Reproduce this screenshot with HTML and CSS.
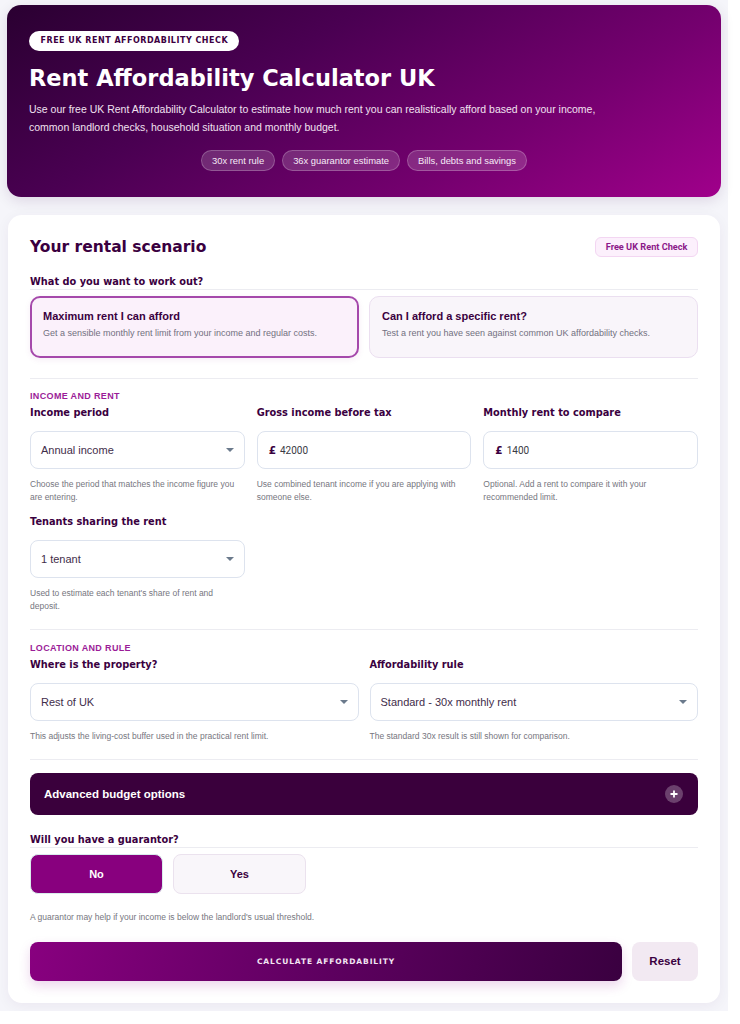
FILE: index.html
```html
<!DOCTYPE html>
<html lang="en">
<head>
<meta charset="utf-8">
<title>Rent Affordability Calculator UK</title>
<link rel="stylesheet" href="styles.css">
</head>
<body>
<div class="page">
  <header class="hero">
    <div class="pill-row"><span class="pill">Free UK Rent Affordability Check</span></div>
    <h1>Rent Affordability Calculator UK</h1>
    <p>Use our free UK Rent Affordability Calculator to estimate how much rent you can realistically afford based on your income, common landlord checks, household situation and monthly budget.</p>
    <div class="chips">
      <span class="chip">30x rent rule</span>
      <span class="chip">36x guarantor estimate</span>
      <span class="chip">Bills, debts and savings</span>
    </div>
  </header>

  <main class="card">
    <div class="card-head">
      <h2>Your rental scenario</h2>
      <span class="badge">Free UK Rent Check</span>
    </div>

    <div class="q-label">What do you want to work out?</div>
    <div class="options">
      <div class="option active">
        <div class="opt-title">Maximum rent I can afford</div>
        <div class="opt-desc">Get a sensible monthly rent limit from your income and regular costs.</div>
      </div>
      <div class="option">
        <div class="opt-title">Can I afford a specific rent?</div>
        <div class="opt-desc">Test a rent you have seen against common UK affordability checks.</div>
      </div>
    </div>

    <section class="section s-income">
      <div class="section-title">Income and rent</div>
      <div class="grid3">
        <div class="field">
          <div class="label">Income period</div>
          <div class="control select"><span class="val">Annual income</span><svg class="arrow" width="8" height="4" viewBox="0 0 8 4"><path d="M0 0H8L4 4Z" fill="#6b7a8c"/></svg></div>
          <div class="help">Choose the period that matches the income figure you are entering.</div>
        </div>
        <div class="field">
          <div class="label">Gross income before tax</div>
          <div class="control"><span class="pound">£</span><span class="num">42000</span></div>
          <div class="help">Use combined tenant income if you are applying with someone else.</div>
        </div>
        <div class="field">
          <div class="label">Monthly rent to compare</div>
          <div class="control"><span class="pound">£</span><span class="num">1400</span></div>
          <div class="help">Optional. Add a rent to compare it with your recommended limit.</div>
        </div>
        <div class="field">
          <div class="label">Tenants sharing the rent</div>
          <div class="control select"><span class="val">1 tenant</span><svg class="arrow" width="8" height="4" viewBox="0 0 8 4"><path d="M0 0H8L4 4Z" fill="#6b7a8c"/></svg></div>
          <div class="help">Used to estimate each tenant's share of rent and deposit.</div>
        </div>
      </div>
    </section>

    <section class="section s-location">
      <div class="section-title">Location and rule</div>
      <div class="grid2">
        <div class="field">
          <div class="label">Where is the property?</div>
          <div class="control select"><span class="val">Rest of UK</span><svg class="arrow" width="8" height="4" viewBox="0 0 8 4"><path d="M0 0H8L4 4Z" fill="#6b7a8c"/></svg></div>
          <div class="help">This adjusts the living-cost buffer used in the practical rent limit.</div>
        </div>
        <div class="field">
          <div class="label">Affordability rule</div>
          <div class="control select"><span class="val">Standard - 30x monthly rent</span><svg class="arrow" width="8" height="4" viewBox="0 0 8 4"><path d="M0 0H8L4 4Z" fill="#6b7a8c"/></svg></div>
          <div class="help">The standard 30x result is still shown for comparison.</div>
        </div>
      </div>
    </section>

    <section class="section s-adv">
      <div class="accordion">
        <span>Advanced budget options</span>
        <span class="plus"><svg width="8" height="8" viewBox="0 0 8 8"><path d="M4 0.5V7.5M0.5 4H7.5" stroke="#fff" stroke-width="1.8"/></svg></span>
      </div>
    </section>

    <div class="q-label q-guar">Will you have a guarantor?</div>
    <div class="toggle">
      <button class="tbtn on">No</button>
      <button class="tbtn">Yes</button>
    </div>
    <div class="help help-guar">A guarantor may help if your income is below the landlord's usual threshold.</div>

    <div class="actions">
      <button class="calc">Calculate affordability</button>
      <button class="reset">Reset</button>
    </div>
  </main>
</div>
</body>
</html>
```

FILE: styles.css
```css
html { background: #ffffff; }
body {
  margin: 0;
  font-family: "Liberation Sans", Arial, sans-serif;
  color: #3b0042;
}
.page {
  width: 728px;
  box-sizing: border-box;
  background: #f5f5fa;
  padding: 5px 7px 8px 7px;
}

/* HERO */
.hero {
  border-radius: 14px;
  background: linear-gradient(150deg, #2a0031 0%, #4a0052 35%, #75006f 70%, #a0008b 100%);
  padding: 26px 22px 26px;
  color: #fff;
  box-shadow: 0 4px 14px rgba(60, 0, 70, 0.12);
}
.pill-row {
  display: flex;
  height: 20px;
}
.pill {
  display: block;
  background: #fff;
  color: #3d0042;
  font-family: "DejaVu Sans", sans-serif;
  font-weight: 700;
  font-size: 8px;
  letter-spacing: 0.5px;
  text-transform: uppercase;
  line-height: 20px;
  height: 20px;
  padding: 0 11px 0 11.5px;
  border-radius: 10px;
}
.hero h1 {
  margin: 13px 0 0;
  font-family: "DejaVu Sans", sans-serif;
  font-weight: 700;
  font-size: 22.5px;
  line-height: 28px;
  color: #fff;
}
.hero p {
  margin: 8px 0 0;
  max-width: 600px;
  font-size: 10.5px;
  line-height: 18px;
  color: #f1e2f0;
}
.chips {
  display: flex;
  justify-content: center;
  gap: 7px;
  margin-top: 14px;
}
.chip {
  height: 21px;
  box-sizing: border-box;
  line-height: 19px;
  padding: 0 10px;
  border-radius: 11px;
  font-size: 9.4px;
  color: #f6eaf6;
  background: rgba(255, 255, 255, 0.16);
  border: 1px solid rgba(255, 255, 255, 0.22);
}

/* CARD */
.card {
  display: block;
  margin: 18px 1px 0;
  background: #fff;
  border-radius: 14px;
  padding: 21px 22px 22px;
  box-shadow: 0 3px 14px rgba(60, 20, 80, 0.06);
}
.card-head {
  display: flex;
  justify-content: space-between;
  align-items: center;
  height: 22px;
}
.card-head h2 {
  margin: 0;
  font-family: "DejaVu Sans", sans-serif;
  font-weight: 700;
  font-size: 15.5px;
  line-height: 22px;
  color: #3a0040;
}
.badge {
  height: 20px;
  box-sizing: border-box;
  line-height: 18px;
  padding: 0 9.5px;
  border-radius: 6px;
  background: #fcf0fc;
  border: 1px solid #f3d6f2;
  color: #8c1a8a;
  font-family: Roboto, "Liberation Sans", sans-serif;
  font-weight: 700;
  font-size: 9.2px;
}

.q-label {
  margin-top: 17px;
  font-family: "DejaVu Sans", sans-serif;
  font-weight: 700;
  font-size: 9.8px;
  line-height: 14px;
  color: #3a0040;
  border-bottom: 1px solid #ececf1;
}
.options {
  display: grid;
  grid-template-columns: 1fr 1fr;
  gap: 10px;
  margin-top: 6px;
}
.option {
  height: 62px;
  box-sizing: border-box;
  border: 1px solid #ebdff0;
  border-radius: 10px;
  background: #f9f5fa;
  padding: 12px 12px 0;
}
.option.active {
  border: 2px solid #a549ab;
  background: #fbf1fb;
  padding: 11px 11px 0;
  box-shadow: 0 2px 6px rgba(140, 40, 140, 0.08);
}
.opt-title {
  font-weight: 700;
  font-size: 11px;
  line-height: 14px;
  color: #3a0040;
}
.opt-desc {
  margin-top: 3.5px;
  font-size: 9px;
  line-height: 13px;
  color: #727080;
}

/* SECTIONS */
.section {
  border-top: 1px solid #ececf1;
}
.s-income { margin-top: 20px; padding-top: 12px; }
.s-location { margin-top: 17px; padding-top: 13px; }
.s-adv { margin-top: 17px; padding-top: 13px; }

.section-title {
  font-weight: 700;
  font-size: 9px;
  line-height: 11px;
  letter-spacing: 0.35px;
  text-transform: uppercase;
  color: #9b1c98;
}
.grid3 {
  display: grid;
  grid-template-columns: repeat(3, 1fr);
  column-gap: 12px;
  row-gap: 12px;
  margin-top: 4px;
}
.grid2 {
  display: grid;
  grid-template-columns: 1fr 1fr;
  column-gap: 11px;
  margin-top: 3.5px;
}
.label {
  font-family: "DejaVu Sans", sans-serif;
  font-weight: 700;
  font-size: 9.8px;
  line-height: 14px;
  color: #3a0040;
}
.control {
  margin-top: 11px;
  height: 38px;
  box-sizing: border-box;
  border: 1px solid #dde3ee;
  border-radius: 8px;
  background: #fff;
  display: flex;
  align-items: center;
  padding: 0 10px 0 10px;
}
.control .val {
  flex: 1;
  font-size: 11px;
  color: #3f2d4a;
}
.pound {
  margin-left: 1px;
  font-family: "DejaVu Sans", sans-serif;
  font-weight: 700;
  font-size: 10.5px;
  color: #3a0040;
}
.num {
  margin-left: 4px;
  font-family: Roboto, "Liberation Sans", sans-serif;
  font-size: 10px;
  color: #3a3a44;
}
.help {
  margin-top: 9px;
  font-size: 8.5px;
  line-height: 12.5px;
  color: #767680;
}

/* ACCORDION */
.accordion {
  height: 42px;
  box-sizing: border-box;
  border-radius: 8px;
  background: #3a003c;
  display: flex;
  align-items: center;
  justify-content: space-between;
  padding: 0 15px 0 14px;
  color: #fff;
  font-weight: 700;
  font-size: 11.5px;
}
.plus {
  width: 18px;
  height: 18px;
  border-radius: 50%;
  background: rgba(255, 255, 255, 0.25);
  display: flex;
  align-items: center;
  justify-content: center;
}

/* GUARANTOR */
.q-guar { margin-top: 18px; }
.toggle {
  display: flex;
  gap: 10px;
  margin-top: 6px;
}
.tbtn {
  width: 133px;
  height: 40px;
  border-radius: 8px;
  font-family: "Liberation Sans", Arial, sans-serif;
  font-weight: 700;
  font-size: 11px;
  border: 1px solid #ebe2ee;
  background: #f9f6fa;
  color: #3a0040;
  padding: 0;
}
.tbtn.on {
  background: #88007e;
  border-color: #d9ecec;
  color: #fff;
}
.help-guar { margin-top: 17px; }

.actions {
  display: flex;
  gap: 10px;
  margin-top: 18px;
}
.calc {
  flex: 1;
  height: 39px;
  border: none;
  border-radius: 8px;
  background: linear-gradient(100deg, #88007f 0%, #5e0060 50%, #3a0040 100%);
  color: #f3e6f3;
  font-family: "DejaVu Sans", sans-serif;
  font-weight: 700;
  font-size: 7.5px;
  letter-spacing: 0.9px;
  text-transform: uppercase;
  box-shadow: 0 5px 12px rgba(150, 30, 150, 0.18);
  padding: 0;
}
.reset {
  width: 66px;
  height: 39px;
  border: none;
  border-radius: 8px;
  background: #f2e9f2;
  color: #3a0040;
  font-family: "Liberation Sans", Arial, sans-serif;
  font-weight: 700;
  font-size: 11.5px;
  padding: 0;
}
```
